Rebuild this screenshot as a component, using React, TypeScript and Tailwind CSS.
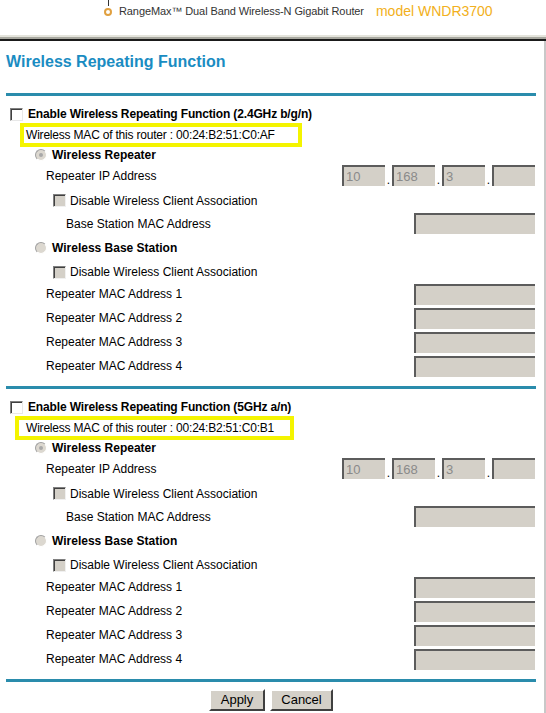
import React from 'react';

const font = "font-['Liberation_Sans',Arial,sans-serif]";

function Checkbox({ disabled }: { disabled?: boolean }) {
  return (
    <span
      className={
        disabled
          ? 'inline-block h-[13px] w-[13px] shrink-0 border border-b-[#f0f0f0] border-l-[#808080] border-r-[#f0f0f0] border-t-[#808080] bg-[#d4d0c8] shadow-[inset_1px_1px_0_#404040]'
          : 'inline-block h-[13px] w-[13px] shrink-0 border border-b-[#e8e8e8] border-l-[#808080] border-r-[#e8e8e8] border-t-[#808080] bg-white shadow-[inset_1px_1px_0_#404040]'
      }
    />
  );
}

function Radio({ checked }: { checked?: boolean }) {
  return (
    <span className="flex h-[12px] w-[12px] shrink-0 items-center justify-center rounded-full border border-b-white border-l-[#a0a0a0] border-r-white border-t-[#a0a0a0] bg-[#dcd8d0]">
      {checked && <span className="h-[4px] w-[4px] rounded-full bg-[#a8a8a8]" />}
    </span>
  );
}

function Field({ w, value }: { w: string; value?: string }) {
  return (
    <div
      className={`${w} h-[21px] shrink-0 border-l-2 border-t-2 border-l-[#5c5c5c] border-t-[#5c5c5c] bg-[#d4d0c8] pl-[2px] text-[13px] leading-[19px] text-[#8a8a8a]`}
    >
      {value}
    </div>
  );
}

function Rule() {
  return <div className="ml-[6px] mr-[8px] h-[3px] bg-[#2a8cac]" />;
}

function Section({ band, mac, boxClass }: { band: string; mac: string; boxClass: string }) {
  const macRows = [1, 2, 3, 4];
  return (
    <div className="flex h-[290px] flex-col text-[12px] text-black">
      <div className="h-[9px]" />
      <div className="flex h-[18px] items-center gap-[5px] pl-[10px]">
        <Checkbox />
        <span className="font-bold tracking-[-0.15px]">Enable Wireless Repeating Function ({band})</span>
      </div>
      <div
        className={`h-[24px] whitespace-nowrap border-4 border-[#f4f400] leading-[16px] tracking-[-0.2px] ${boxClass}`}
      >
        Wireless MAC of this router : {mac}
      </div>
      <div className="flex h-[16px] items-center gap-[5px] pl-[35px]">
        <Radio checked />
        <span className="font-bold">Wireless Repeater</span>
      </div>
      <div className="flex h-[25px] items-center pl-[46px] pr-[9px]">
        <span>Repeater IP Address</span>
        <div className="ml-auto flex items-end gap-0">
          <Field w="w-[43px]" value="10" />
          <span className="w-[7px] text-center leading-[12px]">.</span>
          <Field w="w-[43px]" value="168" />
          <span className="w-[7px] text-center leading-[12px]">.</span>
          <Field w="w-[43px]" value="3" />
          <span className="w-[7px] text-center leading-[12px]">.</span>
          <Field w="w-[43px]" />
        </div>
      </div>
      <div className="flex h-[25px] items-center gap-[4px] pl-[53px]">
        <Checkbox disabled />
        <span>Disable Wireless Client Association</span>
      </div>
      <div className="flex h-[21px] items-center pl-[66px] pr-[9px]">
        <span>Base Station MAC Address</span>
        <div className="ml-auto">
          <Field w="w-[121px]" />
        </div>
      </div>
      <div className="flex h-[28px] items-center gap-[5px] pl-[35px]">
        <Radio />
        <span className="font-bold">Wireless Base Station</span>
      </div>
      <div className="flex h-[20px] items-center gap-[4px] pl-[53px]">
        <Checkbox disabled />
        <span>Disable Wireless Client Association</span>
      </div>
      {macRows.map((n) => (
        <div key={n} className="flex h-[24px] items-center pl-[46px] pr-[9px]">
          <span>Repeater MAC Address {n}</span>
          <div className="ml-auto">
            <Field w="w-[121px]" />
          </div>
        </div>
      ))}
    </div>
  );
}

export default function App() {
  return (
    <div className={`${font} h-[713px] w-[546px] overflow-hidden bg-white`}>
      {/* Header banner */}
      <div className="relative flex h-[35px] items-start pl-[104px] pt-[3px]">
        <div className="absolute left-[108px] top-0 h-[6px] w-[1px] bg-[#333]" />
        <div className="flex h-[16px] items-center gap-[7px]">
          <span className="mt-[2px] h-[8px] w-[8px] rounded-full border-2 border-[#e0a040]" />
          <span className="text-[11px] tracking-[-0.1px] text-[#333]">
            RangeMax™ Dual Band Wireless-N Gigabit Router
          </span>
          <span className="ml-[5px] text-[14px] text-[#f2b020]">model WNDR3700</span>
        </div>
      </div>
      <div className="h-[2px] bg-[#e4e4dc]" />
      <div className="h-[2px] bg-[#a8a8a0]" />
      <div className="h-[2px] bg-[#1a1a1a]" />

      {/* Main panel */}
      <div className="border-r-2 border-[#c8c8c8]">
        <div className="h-[52px] pl-[6px] pt-[12px] text-[16px] font-bold leading-[18px] text-[#1a8cc2]">
          Wireless Repeating Function
        </div>
        <Rule />
        <Section band="2.4GHz b/g/n" mac="00:24:B2:51:C0:AF" boxClass="ml-[20px] w-[282px] pl-[2px]" />
        <Rule />
        <Section band="5GHz a/n" mac="00:24:B2:51:C0:B1" boxClass="ml-[15px] w-[279px] pl-[7px]" />
        <Rule />
        <div className="flex h-[40px] items-start justify-center gap-[5px] pr-[2px] pt-[7px]">
          <button className="h-[22px] w-[56px] border-2 border-b-[#404040] border-l-white border-r-[#404040] border-t-white bg-[#d4d0c8] text-[13px] leading-[16px] text-black">
            Apply
          </button>
          <button className="h-[22px] w-[63px] border-2 border-b-[#404040] border-l-white border-r-[#404040] border-t-white bg-[#d4d0c8] text-[13px] leading-[16px] text-black">
            Cancel
          </button>
        </div>
      </div>
    </div>
  );
}
